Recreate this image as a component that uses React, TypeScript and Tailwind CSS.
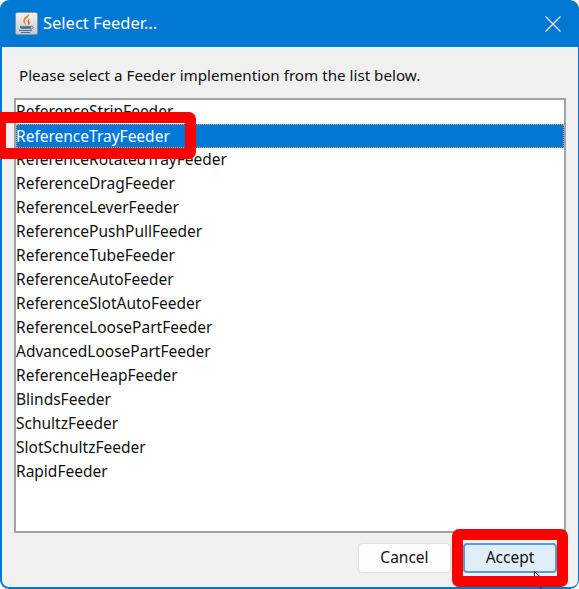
const FEEDERS = [
  'ReferenceStripFeeder',
  'ReferenceTrayFeeder',
  'ReferenceRotatedTrayFeeder',
  'ReferenceDragFeeder',
  'ReferenceLeverFeeder',
  'ReferencePushPullFeeder',
  'ReferenceTubeFeeder',
  'ReferenceAutoFeeder',
  'ReferenceSlotAutoFeeder',
  'ReferenceLoosePartFeeder',
  'AdvancedLoosePartFeeder',
  'ReferenceHeapFeeder',
  'BlindsFeeder',
  'SchultzFeeder',
  'SlotSchultzFeeder',
  'RapidFeeder',
];

function JavaIcon() {
  return (
    <div className="w-[23px] h-[23px] rounded-[2px] border border-[#7f95a8] bg-gradient-to-b from-[#f2f2f2] to-[#c4cacf] flex items-center justify-center">
      <svg width="19" height="20" viewBox="0 0 19 20" fill="none">
        <path d="M12 0c1 3-4 4.500-4 7.500 0 1.500 1 2.500 1.500 3.500-2.500-1-4-3.500-3-6s4-3 5.500-5z" fill="#ea8a2c" />
        <path d="M12.500 5c-2 1-2.500 2.500-1.500 4s0 2-1 2.500c2.500-.5 3.500-2 2.500-3.500s-.5-2 .5-3z" fill="#d9621c" />
        <path d="M3 12h11v1.500c0 1-1 1.500-2 1.500H5c-1 0-2-.5-2-1.500z" fill="#54799a" />
        <path d="M14 12.500c2-.5 3 .5 2 1.500s-2 1-3 1" stroke="#54799a" strokeWidth="1" />
        <path d="M2 16.500h13M4 18.500h9" stroke="#4a6f90" strokeWidth="1.200" />
      </svg>
    </div>
  );
}

function Highlight({ className }: { className: string }) {
  return <div className={`absolute border-[#ff0000] rounded-[7px] ${className}`} />;
}

export default function App() {
  return (
    <div className="relative w-[579px] h-[589px] bg-white overflow-hidden font-['Noto_Sans',sans-serif]">
      <div className="w-[579px] h-[589px] flex flex-col rounded-[9px] overflow-hidden bg-[#0078d4] pl-[2px] pr-[1px] pb-[2px]">
        {/* Title bar */}
        <div className="h-[47px] shrink-0 flex items-center pl-[13px] pr-[17px] text-white">
          <JavaIcon />
          <span className="ml-[5px] text-[16.500px] leading-none">Select Feeder...</span>
          <svg className="ml-auto" width="16" height="16" viewBox="0 0 16 16" stroke="white" strokeWidth="1.100">
            <path d="M.5.500l15 15M15.500.500l-15 15" />
          </svg>
        </div>

        {/* Body */}
        <div className="flex-1 min-h-0 flex flex-col bg-[#f0f0f0] rounded-b-[7px] px-[12px]">
          <p className="h-[51px] shrink-0 pt-[16px] pl-[5px] text-[15.200px] leading-[24px] text-[#111111]">
            Please select a Feeder implemention from the list below.
          </p>
          <div className="h-[435px] shrink-0 border-2 border-[#a0a4a8] bg-white text-[15.500px] text-[#111111]">
            {FEEDERS.map((name) => (
              <div
                key={name}
                className={
                  name === 'ReferenceTrayFeeder'
                    ? 'h-[24px] leading-[24px] bg-[#0078d7] text-white outline outline-1 outline-dotted -outline-offset-1 outline-[#e89a50]'
                    : 'h-[24px] leading-[23px]'
                }
              >
                {name}
              </div>
            ))}
          </div>
          <div className="flex justify-end gap-[12px] pt-[10px] pr-[9px]">
            <button className="w-[93px] h-[30px] pb-[1px] rounded-[4px] border border-[#dedede] bg-[#fdfdfd] text-[15.500px] leading-none text-[#111111]">
              Cancel
            </button>
            <button className="w-[94px] h-[30px] pb-[1px] rounded-[4px] border-2 border-[#4f9fdc] bg-[#e0eefa] text-[15.500px] leading-none text-[#111111]">
              Accept
            </button>
          </div>
        </div>
      </div>

      {/* Mouse pointer, the red box was drawn over it */}
      <svg className="absolute left-[534px] top-[571px]" width="12" height="19" viewBox="0 0 12 19">
        <path d="M.5.500v14l3.500-3.500 2.500 6 2-1-2.500-5.500h5z" fill="white" stroke="#222" strokeWidth="1" />
      </svg>

      {/* Red annotations */}
      <Highlight className="left-[-5px] top-[112px] w-[201px] h-[47px] border-[11px]" />
      <Highlight className="left-[452px] top-[529px] w-[116px] h-[58px] border-[11px]" />
    </div>
  );
}
